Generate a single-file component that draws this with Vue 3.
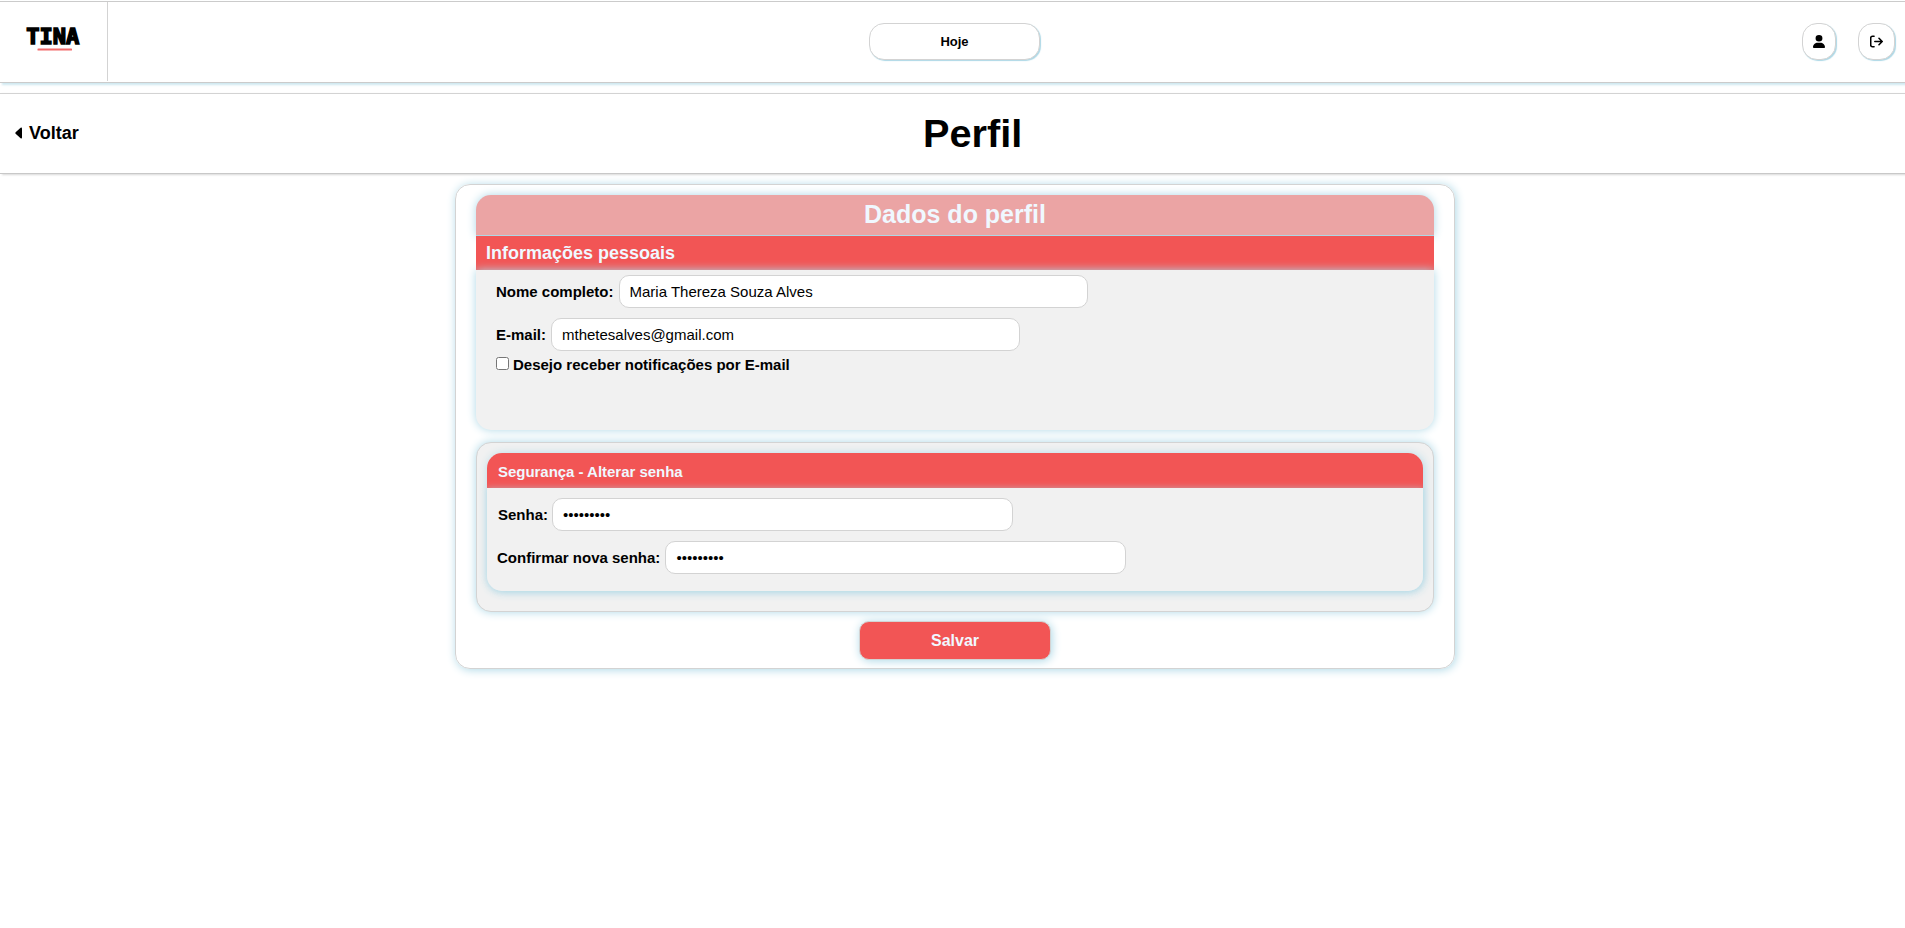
<script setup>
import { ref } from 'vue'
const nome = ref('Maria Thereza Souza Alves')
const email = ref('mthetesalves@gmail.com')
const senha = ref('123456789')
const confirma = ref('123456789')
</script>

<template>
  <div class="page">
    <header class="top">
      <div class="brand">
        <svg width="56" height="28" viewBox="0 0 56 28">
          <text class="logo" x="1.200" y="18" textLength="53" lengthAdjust="spacingAndGlyphs">TINA</text>
          <rect x="12.500" y="22.600" width="34.500" height="1.900" rx=".6" fill="#f26a6a" />
        </svg>
      </div>
      <button class="pill today">Hoje</button>
      <nav class="actions">
        <button class="pill user" aria-label="Perfil">
          <svg width="12" height="13" viewBox="0 0 448 512" preserveAspectRatio="none"><path d="M224 256a128 128 0 1 0 0-256 128 128 0 1 0 0 256zm-45.700 48C79.800 304 0 383.800 0 482.300 0 498.700 13.300 512 29.700 512h388.600c16.400 0 29.700-13.300 29.700-29.700C448 383.800 368.200 304 269.700 304z" /></svg>
        </button>
        <button class="pill exit" aria-label="Sair">
          <svg width="13" height="13" viewBox="0 0 512 512"><path d="M160 52H96a68 68 0 0 0-68 68v272a68 68 0 0 0 68 68h64M190 256h284M354 130l126 126-126 126" fill="none" stroke="#000" stroke-width="62" stroke-linecap="round" stroke-linejoin="round" /></svg>
        </button>
      </nav>
    </header>

    <div class="title-bar">
      <a class="back">
        <svg width="7" height="12" viewBox="0 0 7 12"><path d="M5.600.7 .6 5.200Q0 6 .6 6.800L5.600 11.300Q7 12 7 10.500V1.500Q7 0 5.600.7z" /></svg>
        <span>Voltar</span>
      </a>
      <h1>Perfil</h1>
    </div>

    <main class="card">
      <h2>Dados do perfil</h2>
      <h3 class="info-title">Informações pessoais</h3>
      <section class="info">
        <div class="row"><label>Nome completo:</label><input v-model="nome" type="text" /></div>
        <div class="row"><label>E-mail:</label><input v-model="email" type="text" /></div>
        <div class="check"><input type="checkbox" /><label>Desejo receber notificações por E-mail</label></div>
      </section>
      <section class="security">
        <div class="security-inner">
          <h4>Segurança - Alterar senha</h4>
          <div class="fields">
            <div class="row first"><label>Senha:</label><input v-model="senha" type="password" /></div>
            <div class="row"><label>Confirmar nova senha:</label><input v-model="confirma" type="password" /></div>
          </div>
        </div>
      </section>
      <button class="save">Salvar</button>
    </main>
  </div>
</template>

<style>
body { background: #fff; }
</style>

<style scoped>
* { box-sizing: border-box; }
.page { font-family: "Liberation Sans", Arial, sans-serif; color: #000; padding-top: 1px; height: 928px; overflow: hidden; }
h1, h2, h3, h4 { margin: 0; }
.top { display: flex; height: 82px; border-top: 1px solid #cbcbcb; border-bottom: 1px solid #cbcbcb; box-shadow: 2px 2px 2px rgba(173, 216, 230, .6); }
.brand { width: 108px; height: 79px; border-right: 1px solid #d3d3d3; padding: 17px 0 0 25px; }
.brand svg { display: block; margin-top: 7px; }
.logo { font: bold 21px "DejaVu Sans Mono", monospace; stroke: #000; stroke-width: 1.5px; }
.pill { display: flex; align-items: center; justify-content: center; height: 37px; margin: 21px 0 0; padding: 0 0 1px; border: 1px solid #d3d3d3; border-radius: 15px; background: #fff; box-shadow: 1px 1px 1px lightblue; font: bold 13px "Liberation Sans", Arial, sans-serif; color: #000; }
.today { width: 171px; margin-left: 761px; }
.actions { display: flex; gap: 22px; margin-left: auto; padding-right: 10px; }
.user { width: 34px; }
.exit { width: 37px; }
.title-bar { display: flex; align-items: center; height: 81px; margin-top: 10px; border-top: 1px solid #d3d3d3; border-bottom: 1px solid #c8c8c8; box-shadow: 2px 1px 2px #d8d8d8; }
.back { display: flex; align-items: center; gap: 7px; width: 923px; padding-left: 15px; font-size: 18px; font-weight: bold; }
.back svg { margin-bottom: 2px; }
h1 { margin-bottom: 2px; font-size: 39.700px; line-height: 46px; }
.card { width: 1000px; height: 485px; margin: 10px auto 0 455px; padding: 10px 20px 0; border: 1px solid #d3d3d3; border-radius: 15px; box-shadow: 1px 1px 10px lightblue; }
h2 { height: 41px; border-bottom: 1px solid lightblue; border-radius: 15px 15px 0 0; background: #eba4a4; box-shadow: 0 0 10px lightblue; color: aliceblue; font-size: 25px; line-height: 39px; text-align: center; }
.info-title { position: relative; height: 34px; padding-left: 10px; background: #f25555; color: aliceblue; font-size: 18px; line-height: 34px; }
.info { position: relative; height: 160px; padding: 5px 20px 0; border-radius: 0 0 15px 15px; background: #f1f1f1; box-shadow: 0 0 10px lightblue; }
.row { display: flex; align-items: center; gap: 5px; height: 33px; margin-bottom: 10px; font-size: 15px; font-weight: bold; }
.row label { white-space: nowrap; }
.row input { width: 469px; height: 33px; padding: 0 10px; border: 1px solid #d3d3d3; border-radius: 10px; background: #fff; color: #000; font: 15px "Liberation Sans", Arial, sans-serif; outline: none; }
.check { display: flex; align-items: center; gap: 4px; margin-top: -5px; font-size: 15px; font-weight: bold; }
.check input { width: 13px; height: 13px; margin: 0 0 2px; }
.security { position: relative; height: 170px; margin-top: 12px; padding: 10px; border: 1px solid #d3d3d3; border-radius: 15px; background: #f1f1f1; box-shadow: 0 0 10px lightblue; }
.security-inner { height: 138px; border-radius: 15px; box-shadow: 1px 1px 10px lightblue; }
h4 { height: 35px; padding: 2px 11px 0; border-radius: 15px 15px 0 0; background: #f25555; color: aliceblue; font-size: 15px; line-height: 33px; letter-spacing: -.03px; }
.fields { position: relative; height: 103px; padding: 10px 10px 0; border-radius: 0 0 15px 15px; background: #f1f1f1; box-shadow: 0 0 6px rgba(173, 216, 230, .6); }
.fields .row input { width: 461px; }
.fields .first { gap: 4px; padding-left: 1px; }
.save { position: relative; display: block; width: 192px; height: 39px; margin: 9px auto 0 383px; border: 1px solid #d3d3d3; border-radius: 10px; background: #f25555; box-shadow: 1px 1px 10px lightblue; color: aliceblue; font: bold 16px "Liberation Sans", Arial, sans-serif; }
</style>
